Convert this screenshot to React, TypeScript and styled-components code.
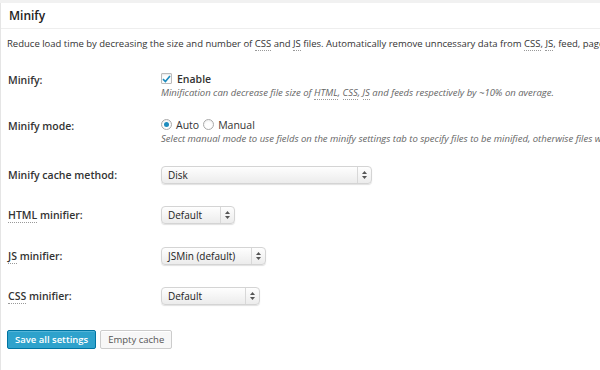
import React from 'react';
import styled, { createGlobalStyle } from 'styled-components';

const GlobalStyle = createGlobalStyle`
  html, body {
    margin: 0;
    padding: 0;
    background: #f1f1f1;
    overflow: hidden;
  }
  body {
    font-family: "Open Sans", "Liberation Sans", sans-serif;
    color: #444;
  }
`;

const Page = styled.div`
  width: 600px;
  height: 370px;
  padding-top: 3px;
  box-sizing: border-box;
  overflow: hidden;
`;

const Panel = styled.div`
  background: #fff;
  border-left: 1px solid #e5e5e5;
  height: 367px;
  box-sizing: border-box;
`;

const Header = styled.div`
  height: 25px;
  display: flex;
  align-items: center;
  padding-left: 8px;
  border-bottom: 1px solid #eee;
  font-size: 12px;
  font-weight: 600;
  color: #222;
`;

const Intro = styled.p`
  margin: 0;
  padding: 8px 0 0 6px;
  font-size: 9.5px;
  line-height: 14px;
  white-space: nowrap;
  color: #333;
`;

const Abbr = styled.abbr`
  text-decoration: none;
  border-bottom: 1px dotted #999;
`;

const Form = styled.div`
  display: flex;
  flex-direction: column;
  padding: 19px 0 0 7px;
`;

const Row = styled.div<{ $height: number }>`
  display: grid;
  grid-template-columns: 153px 1fr;
  align-items: start;
  height: ${p => p.$height}px;
`;

const Label = styled.div<{ $top: number }>`
  font-size: 10.5px;
  font-weight: 600;
  color: #333;
  padding-top: ${p => p.$top}px;
`;

const Field = styled.div<{ $top: number }>`
  display: flex;
  flex-direction: column;
  padding-top: ${p => p.$top}px;
  white-space: nowrap;
`;

const Inline = styled.div<{ $bold?: boolean }>`
  display: flex;
  align-items: center;
  font-size: 10.5px;
  font-weight: ${p => (p.$bold ? 600 : 400)};
  color: #333;
  height: 13px;
`;

const Check = styled.span`
  width: 11px;
  height: 11px;
  border: 1px solid #bbb;
  border-radius: 1px;
  box-sizing: border-box;
  box-shadow: inset 0 1px 2px rgba(0, 0, 0, 0.1);
  display: flex;
  align-items: center;
  justify-content: center;
  margin-right: 5px;
  background: #fff;
`;

const Radio = styled.span<{ $checked?: boolean; $gap?: number }>`
  width: 11px;
  height: 11px;
  border: 1px solid #aaa;
  border-radius: 50%;
  box-sizing: border-box;
  display: inline-flex;
  align-items: center;
  justify-content: center;
  margin: 0 4px 0 ${p => p.$gap ?? 0}px;
  background: #fff;
  box-shadow: inset 0 1px 2px rgba(0, 0, 0, 0.08);

  &::after {
    content: '';
    width: 5px;
    height: 5px;
    border-radius: 50%;
    background: ${p => (p.$checked ? '#1e8cbe' : 'transparent')};
  }
`;

const Note = styled.div`
  font-size: 9.5px;
  font-style: italic;
  color: #666;
  margin-top: 1px;
`;

const Select = styled.div<{ $width: number }>`
  width: ${p => p.$width}px;
  height: 18px;
  box-sizing: border-box;
  border-radius: 4px;
  border: 1px solid #d4d4d4;
  background: linear-gradient(#fefefe, #ececec);
  box-shadow: 0 1px 1px rgba(0, 0, 0, 0.12);
  display: flex;
  align-items: center;
  font-size: 10px;
  color: #222;
  overflow: hidden;
`;

const SelectText = styled.span`
  flex: 1;
  padding-left: 6px;
`;

const SelectArrow = styled.span`
  width: 13px;
  height: 100%;
  border-left: 1px solid #d8d8d8;
  display: flex;
  align-items: center;
  justify-content: center;
`;

const Buttons = styled.div`
  display: flex;
  gap: 4px;
  padding: 25px 0 0 6px;
`;

const Button = styled.button<{ $primary?: boolean }>`
  height: 19px;
  padding: 0 7px;
  font-family: inherit;
  font-size: 9.5px;
  font-weight: ${p => (p.$primary ? 600 : 400)};
  border-radius: 2px;
  border: 1px solid ${p => (p.$primary ? '#0074a2' : '#ccc')};
  background: ${p => (p.$primary ? '#2ea2cc' : '#f7f7f7')};
  color: ${p => (p.$primary ? '#fff' : '#555')};
  box-shadow: ${p =>
    p.$primary ? 'inset 0 1px 0 rgba(120,200,230,0.5)' : 'inset 0 1px 0 #fff'};
  cursor: pointer;
`;

const Arrows = () => (
  <svg width="5" height="8" viewBox="0 0 5 8">
    <path d="M2.5 0 L5 3 H0 Z" fill="#555" />
    <path d="M2.5 8 L5 5 H0 Z" fill="#555" />
  </svg>
);

const Dropdown: React.FC<{ width: number; value: string }> = ({ width, value }) => (
  <Select $width={width}>
    <SelectText>{value}</SelectText>
    <SelectArrow>
      <Arrows />
    </SelectArrow>
  </Select>
);

const App: React.FC = () => {
  return (
    <Page>
      <GlobalStyle />
      <Panel>
        <Header>Minify</Header>
        <Intro>
          Reduce load time by decreasing the size and number of <Abbr>CSS</Abbr> and{' '}
          <Abbr>JS</Abbr> files. Automatically remove unncessary data from <Abbr>CSS</Abbr>,{' '}
          <Abbr>JS</Abbr>, feed, page and post <Abbr>HTML</Abbr>.
        </Intro>
        <Form>
          <Row $height={48}>
            <Label $top={3}>Minify:</Label>
            <Field $top={2}>
              <Inline $bold>
                <Check>
                  <svg width="9" height="8" viewBox="0 0 9 8">
                    <path d="M1 4.2 L3.4 6.5 L8 1" stroke="#1e8cbe" strokeWidth="1.7" fill="none" />
                  </svg>
                </Check>
                Enable
              </Inline>
              <Note>
                Minification can decrease file size of <Abbr>HTML</Abbr>, <Abbr>CSS</Abbr>,{' '}
                <Abbr>JS</Abbr> and feeds respectively by ~10% on average.
              </Note>
            </Field>
          </Row>
          <Row $height={48}>
            <Label $top={1}>Minify mode:</Label>
            <Field $top={0}>
              <Inline>
                <Radio $checked />
                Auto
                <Radio $gap={4} />
                Manual
              </Inline>
              <Note>
                Select manual mode to use fields on the minify settings tab to specify files to be
                minified, otherwise files will be minified automatically.
              </Note>
            </Field>
          </Row>
          <Row $height={40}>
            <Label $top={2}>Minify cache method:</Label>
            <Field $top={0}>
              <Dropdown width={211} value="Disk" />
            </Field>
          </Row>
          <Row $height={41}>
            <Label $top={2}>
              <Abbr>HTML</Abbr> minifier:
            </Label>
            <Field $top={0}>
              <Dropdown width={74} value="Default" />
            </Field>
          </Row>
          <Row $height={40}>
            <Label $top={2}>
              <Abbr>JS</Abbr> minifier:
            </Label>
            <Field $top={0}>
              <Dropdown width={105} value="JSMin (default)" />
            </Field>
          </Row>
          <Row $height={18}>
            <Label $top={2}>
              <Abbr>CSS</Abbr> minifier:
            </Label>
            <Field $top={0}>
              <Dropdown width={99} value="Default" />
            </Field>
          </Row>
        </Form>
        <Buttons>
          <Button $primary>Save all settings</Button>
          <Button>Empty cache</Button>
        </Buttons>
      </Panel>
    </Page>
  );
};

export default App;
